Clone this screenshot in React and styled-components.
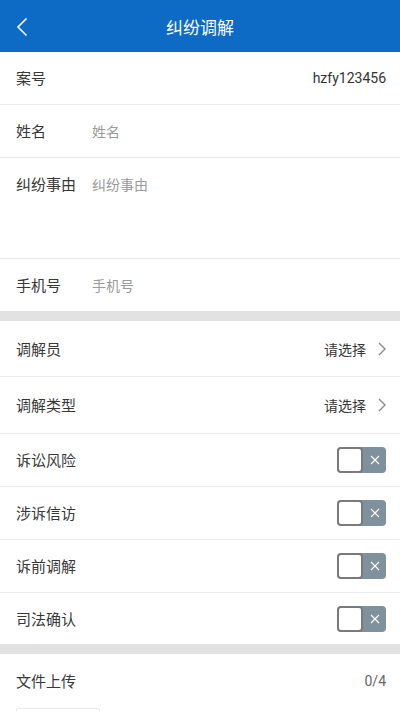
import React from 'react'
import styled, { createGlobalStyle } from 'styled-components'

const GlobalStyle = createGlobalStyle`
  html, body {
    margin: 0;
    padding: 0;
    background: #fff;
  }
  body {
    font-family: "Noto Sans CJK SC", "Noto Sans", sans-serif;
    color: #333;
  }
  * {
    box-sizing: border-box;
  }
`

const Page = styled.div`
  width: 400px;
  min-height: 711px;
  background: #fff;
`

const Header = styled.header`
  position: relative;
  display: flex;
  align-items: center;
  justify-content: center;
  height: 52px;
  background: #0e6bc5;
  color: #fff;
`

const Title = styled.h1`
  margin: 0;
  font-size: 17px;
  font-weight: 400;
  line-height: 1;
`

const Back = styled.button`
  position: absolute;
  left: 10px;
  top: 14px;
  display: flex;
  align-items: center;
  justify-content: center;
  width: 24px;
  height: 26px;
  padding: 0;
  border: 0;
  background: none;
`

const Group = styled.section`
  background: #fff;
  border-bottom: ${p => (p.$last ? '0' : '10px solid #e2e2e2')};
`

const Row = styled.div`
  display: flex;
  align-items: ${p => (p.$tall ? 'flex-start' : 'center')};
  height: ${p => p.$h || 53}px;
  margin: 0;
  padding: ${p => (p.$tall ? '16px 14px 0 16px' : '0 14px 0 16px')};
  border-bottom: ${p => (p.$noLine ? '0' : '1px solid #ececec')};
`

const Label = styled.span`
  flex: ${p => (p.$fixed ? '0 0 76px' : '1 1 auto')};
  font-size: 15px;
  line-height: 20px;
  color: #383838;
`

const Placeholder = styled.span`
  flex: 1;
  font-size: 14px;
  line-height: 20px;
  color: #9a9a9a;
`

const Value = styled.span`
  font-family: Roboto, "Noto Sans CJK SC", sans-serif;
  font-size: 14px;
  color: ${p => (p.$muted ? '#666' : '#333')};
`

const Select = styled.div`
  display: flex;
  align-items: center;
  gap: 12px;
  font-size: 14px;
  color: #383838;
`

const Switch = styled.div`
  display: flex;
  width: 49px;
  height: 26px;
  border-radius: 4px;
  background: #7f919d;
  overflow: hidden;
`

const Knob = styled.div`
  width: 26px;
  height: 26px;
  border: 2px solid #7a7a7a;
  border-radius: 4px;
  background: #fff;
`

const Cross = styled.div`
  flex: 1;
  display: flex;
  align-items: center;
  justify-content: center;
`

const UploadBox = styled.div`
  width: 84px;
  height: 84px;
  margin: 0 16px;
  border: 1px solid #eaeaea;
  border-radius: 2px;
`

const Chevron = () => (
  <svg width="8" height="14" viewBox="0 0 8 14">
    <path d="M1 1l6 6-6 6" fill="none" stroke="#8a8a8a" strokeWidth="1.4" />
  </svg>
)

const Toggle = () => (
  <Switch>
    <Knob />
    <Cross>
      <svg width="10" height="10" viewBox="0 0 10 10">
        <path d="M1 1l8 8M9 1l-8 8" stroke="#fff" strokeWidth="1.2" />
      </svg>
    </Cross>
  </Switch>
)

const toggles = ['诉讼风险', '涉诉信访', '诉前调解', '司法确认']

export default function App() {
  return (
    <Page>
      <GlobalStyle />
      <Header>
        <Back aria-label="返回">
          <svg width="12" height="20" viewBox="0 0 12 20">
            <path d="M10.5 1.5L2 10l8.5 8.5" fill="none" stroke="#fff" strokeWidth="1.6" />
          </svg>
        </Back>
        <Title>纠纷调解</Title>
      </Header>

      <Group>
        <Row>
          <Label>案号</Label>
          <Value>hzfy123456</Value>
        </Row>
        <Row>
          <Label $fixed>姓名</Label>
          <Placeholder>姓名</Placeholder>
        </Row>
        <Row $tall $h={101}>
          <Label $fixed>纠纷事由</Label>
          <Placeholder>纠纷事由</Placeholder>
        </Row>
        <Row $h={52} $noLine>
          <Label $fixed>手机号</Label>
          <Placeholder>手机号</Placeholder>
        </Row>
      </Group>

      <Group>
        <Row $h={56}>
          <Label>调解员</Label>
          <Select>
            请选择
            <Chevron />
          </Select>
        </Row>
        <Row $h={57}>
          <Label>调解类型</Label>
          <Select>
            请选择
            <Chevron />
          </Select>
        </Row>
        {toggles.map((t, i) => (
          <Row key={t} $h={i === toggles.length - 1 ? 51 : 53} $noLine={i === toggles.length - 1}>
            <Label>{t}</Label>
            <Toggle />
          </Row>
        ))}
      </Group>

      <Group $last>
        <Row $h={54} $noLine>
          <Label>文件上传</Label>
          <Value $muted>0/4</Value>
        </Row>
        <UploadBox />
      </Group>
    </Page>
  )
}
